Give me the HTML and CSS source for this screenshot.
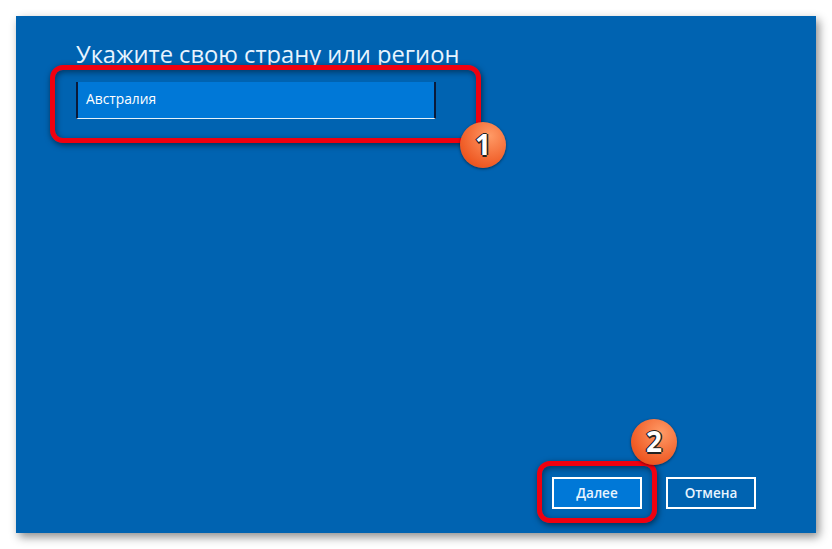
FILE: index.html
```html
<!DOCTYPE html>
<html lang="ru">
<head>
<meta charset="utf-8">
<title>Регион</title>
<link rel="stylesheet" href="styles.css">
</head>
<body>
<main class="panel">
  <h1 class="title">Укажите свою страну или регион</h1>
  <div class="select">Австралия</div>
  <div class="footer">
    <button class="btn btn-primary">Далее</button>
    <button class="btn">Отмена</button>
  </div>
  <div class="mark mark-one"></div>
  <div class="mark mark-two"></div>
  <div class="badge badge-one">1</div>
  <div class="badge badge-two">2</div>
</main>
</body>
</html>
```
FILE: styles.css
```css
* { box-sizing: border-box; }
html, body { margin: 0; height: 100%; background: #fff; }
body { padding: 16px; font-family: "Open Sans", "Noto Sans", sans-serif; overflow: hidden; }
.panel {
  position: relative;
  width: 800px;
  height: 517px;
  background: #0063b1;
  box-shadow: 3px 4px 9px rgba(0,0,0,.45);
  padding: 24px 60px 24px 60px;
  display: flex;
  flex-direction: column;
  color: #fff;
}
.title {
  margin: 0;
  height: 42px;
  font-size: 23.7px;
  line-height: 29px;
  font-weight: 400;
  color: #e8f4ff;
  white-space: nowrap;
}
.select {
  width: 360px;
  height: 37px;
  background: #0078d7;
  border-left: 2px solid #0a1a3a;
  border-right: 2px solid #0a1a3a;
  border-bottom: 1px solid #e6f2fb;
  padding: 0 0 0 8px;
  font-size: 13.8px;
  line-height: 34px;
}
.footer {
  margin-top: auto;
  display: flex;
  justify-content: flex-end;
  gap: 24px;
}
.btn {
  width: 90px;
  height: 32px;
  background: #0063b1;
  border: 2px solid #fff;
  color: #e8f4ff;
  font: 600 13.5px "Open Sans", "Noto Sans", sans-serif;
  padding: 0;
}
.btn-primary { background: #0078d7; }
.mark {
  position: absolute;
  border: 5px solid #f0000f;
  border-radius: 13px;
  box-shadow: 1px 2px 6px rgba(0,0,0,.55), inset 1px 2px 6px rgba(0,0,0,.45);
}
.mark-one { left: 34px; top: 49px; width: 431px; height: 78px; }
.mark-two { left: 521px; top: 445px; width: 120px; height: 62px; }
.badge {
  position: absolute;
  width: 46px;
  height: 46px;
  border-radius: 50%;
  background: radial-gradient(circle at 65% 30%, #ff9a66, #ef5a24 70%, #d8461a);
  box-shadow: 0 1px 3px rgba(0,0,0,.5);
  text-align: center;
  font: 700 28px/45px "Open Sans", sans-serif;
  color: #fff;
  text-shadow: -1.5px 0 #222, 1.5px 0 #222, 0 -1.5px #222, 0 1.5px #222;
}
.badge-one { left: 444px; top: 106px; }
.badge-two { left: 615px; top: 403px; }
```
